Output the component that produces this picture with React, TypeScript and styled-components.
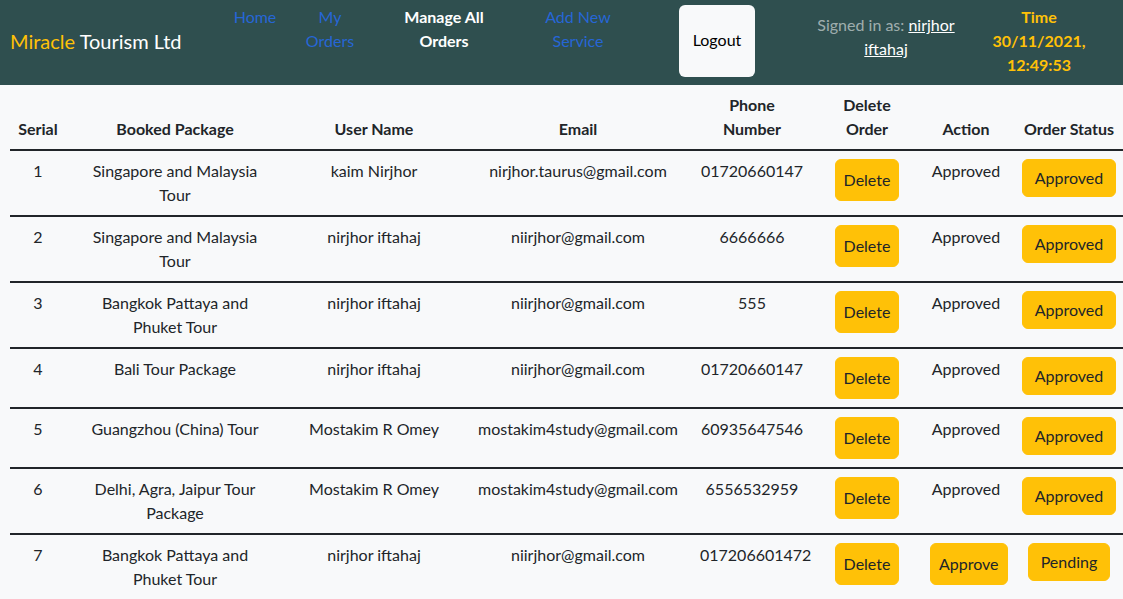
import React from "react";
import styled, { createGlobalStyle } from "styled-components";

const FONT = `Lato, "Noto Sans", "Liberation Sans", sans-serif`;

const Global = createGlobalStyle`
  html, body { margin: 0; padding: 0; }
  body {
    background: #f8f9fa;
    font-family: ${FONT};
    font-size: 16px;
    color: #212529;
    overflow: hidden;
  }
  * { box-sizing: border-box; }
`;

const Header = styled.header`
  display: flex;
  align-items: flex-start;
  height: 85px;
  background: #2f4f4f;
  padding: 5px 0 0 10px;
`;

const Brand = styled.div`
  width: 215px;
  margin-top: 21px;
  font-size: 20px;
  line-height: 30px;
  color: #ffffff;
  white-space: nowrap;
`;

const BrandAccent = styled.span`
  color: #ffc107;
`;

const NavLink = styled.a<{ $w: number; $active?: boolean }>`
  display: block;
  width: ${(p) => p.$w}px;
  text-align: center;
  line-height: 24px;
  color: ${(p) => (p.$active ? "#ffffff" : "#2666d6")};
  font-weight: ${(p) => (p.$active ? 700 : 400)};
  text-decoration: none;
  cursor: pointer;
`;

const LogoutButton = styled.button`
  margin-left: 36px;
  width: 76px;
  height: 72px;
  background: #f8f9fa;
  border: none;
  border-radius: 6px;
  font-family: ${FONT};
  font-size: 16px;
  line-height: 24px;
  color: #000;
  padding: 0 0 2px;
`;

const SignedIn = styled.div`
  width: 150px;
  margin-left: 56px;
  margin-top: 8px;
  text-align: center;
  line-height: 24px;
  color: rgba(255, 255, 255, 0.55);
`;

const UserLink = styled.a`
  color: #ffffff;
  text-decoration: underline;
`;

const TimeBox = styled.div`
  width: 140px;
  margin-left: 8px;
  display: flex;
  flex-direction: column;
  align-items: center;
  line-height: 24px;
  font-weight: 700;
  color: #ffc107;
  white-space: nowrap;
`;

const Table = styled.table`
  table-layout: fixed;
  border-collapse: collapse;
  width: 1118px;
  margin-left: 10px;
`;

const Col = styled.col<{ $w: number }>`
  width: ${(p) => p.$w}px;
`;

const Th = styled.th`
  padding: 8px;
  vertical-align: bottom;
  text-align: center;
  font-weight: 700;
  line-height: 24px;
  border-bottom: 2px solid #212529;
`;

const Td = styled.td`
  padding: 8px;
  vertical-align: top;
  text-align: center;
  line-height: 24px;
  border-bottom: 2px solid #212529;
`;

const PackageText = styled.span`
  display: inline-block;
  max-width: 190px;
`;

const YellowButton = styled.button<{ $tall?: boolean }>`
  background: #ffc107;
  border: 1px solid #ffc107;
  border-radius: 6px;
  font-family: ${FONT};
  font-size: 16px;
  line-height: 24px;
  color: #212529;
  padding: ${(p) => (p.$tall ? "8px 8px" : "6px 12px")};
  cursor: pointer;
`;

type Order = {
  pkg: string;
  user: string;
  email: string;
  phone: string;
  approved: boolean;
};

const orders: Order[] = [
  { pkg: "Singapore and Malaysia Tour", user: "kaim Nirjhor", email: "nirjhor.taurus@gmail.com", phone: "01720660147", approved: true },
  { pkg: "Singapore and Malaysia Tour", user: "nirjhor iftahaj", email: "niirjhor@gmail.com", phone: "6666666", approved: true },
  { pkg: "Bangkok Pattaya and Phuket Tour", user: "nirjhor iftahaj", email: "niirjhor@gmail.com", phone: "555", approved: true },
  { pkg: "Bali Tour Package", user: "nirjhor iftahaj", email: "niirjhor@gmail.com", phone: "01720660147", approved: true },
  { pkg: "Guangzhou (China) Tour", user: "Mostakim R Omey", email: "mostakim4study@gmail.com", phone: "60935647546", approved: true },
  { pkg: "Delhi, Agra, Jaipur Tour Package", user: "Mostakim R Omey", email: "mostakim4study@gmail.com", phone: "6556532959", approved: true },
  { pkg: "Bangkok Pattaya and Phuket Tour", user: "nirjhor iftahaj", email: "niirjhor@gmail.com", phone: "017206601472", approved: false },
];

export default function App() {
  return (
    <>
      <Global />
      <Header>
        <Brand>
          <BrandAccent>Miracle</BrandAccent> Tourism Ltd
        </Brand>
        <NavLink $w={60}>Home</NavLink>
        <NavLink $w={90}>My<br />Orders</NavLink>
        <NavLink $w={138} $active>Manage All<br />Orders</NavLink>
        <NavLink $w={130}>Add New<br />Service</NavLink>
        <LogoutButton>Logout</LogoutButton>
        <SignedIn>
          Signed in as: <UserLink>nirjhor</UserLink>
          <br />
          <UserLink>iftahaj</UserLink>
        </SignedIn>
        <TimeBox>
          <span>Time</span>
          <span>30/11/2021,</span>
          <span>12:49:53</span>
        </TimeBox>
      </Header>
      <Table>
        <colgroup>
          <Col $w={56} />
          <Col $w={218} />
          <Col $w={180} />
          <Col $w={228} />
          <Col $w={120} />
          <Col $w={110} />
          <Col $w={88} />
          <Col $w={118} />
        </colgroup>
        <thead>
          <tr>
            <Th>Serial</Th>
            <Th>Booked Package</Th>
            <Th>User Name</Th>
            <Th>Email</Th>
            <Th>Phone<br />Number</Th>
            <Th>Delete<br />Order</Th>
            <Th>Action</Th>
            <Th>Order Status</Th>
          </tr>
        </thead>
        <tbody>
          {orders.map((o, i) => (
            <tr key={i}>
              <Td>{i + 1}</Td>
              <Td><PackageText>{o.pkg}</PackageText></Td>
              <Td>{o.user}</Td>
              <Td>{o.email}</Td>
              <Td>{o.phone}</Td>
              <Td><YellowButton $tall>Delete</YellowButton></Td>
              <Td>{o.approved ? "Approved" : <YellowButton $tall>Approve</YellowButton>}</Td>
              <Td><YellowButton>{o.approved ? "Approved" : "Pending"}</YellowButton></Td>
            </tr>
          ))}
        </tbody>
      </Table>
    </>
  );
}
